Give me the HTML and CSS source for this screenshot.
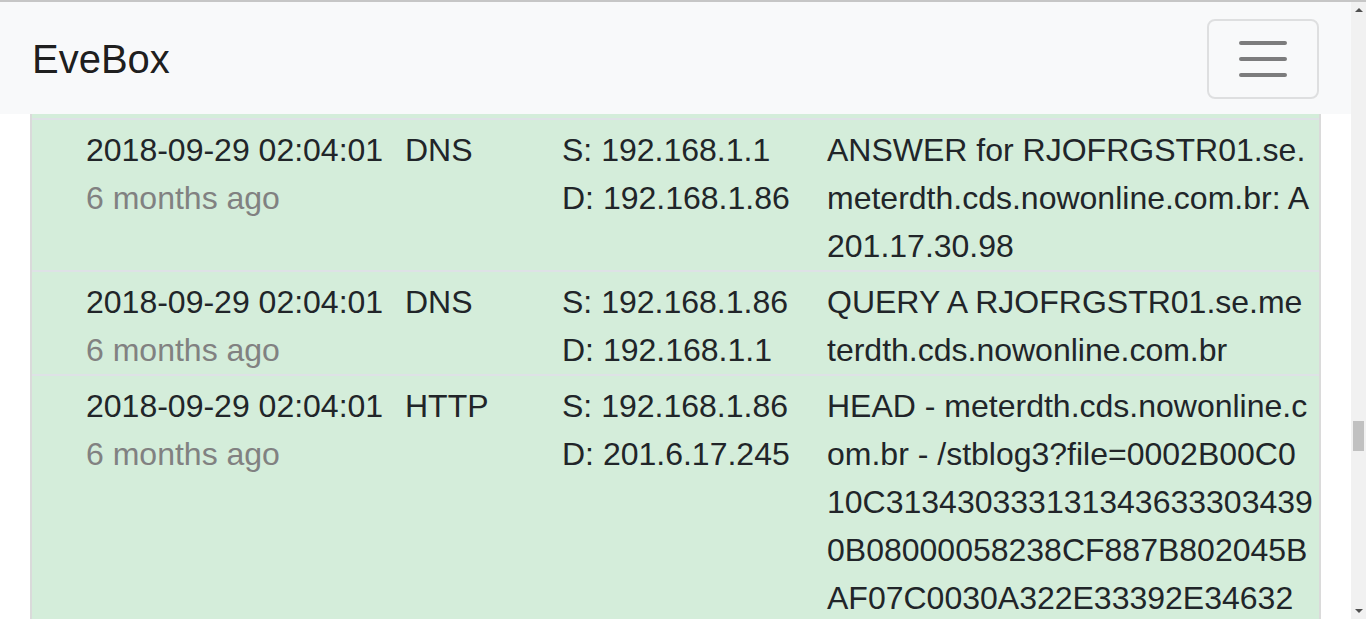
FILE: index.html
```html
<!DOCTYPE html>
<html lang="en">
<head>
<meta charset="utf-8">
<title>EveBox</title>
<link rel="stylesheet" href="styles.css">
</head>
<body>
<div class="window">
  <div class="page">
    <nav class="navbar">
      <a class="brand" href="#">EveBox</a>
      <button class="toggler" type="button" aria-label="Toggle navigation">
        <svg viewBox="0 0 30 30" width="60" height="60"><path d="M4 7h22M4 15h22M4 23h22" stroke="rgba(0,0,0,0.5)" stroke-width="2" stroke-linecap="round" fill="none"/></svg>
      </button>
    </nav>
    <main class="content">
      <div class="events">
        <div class="row-tail"></div>
        <div class="event">
          <div class="cell c-time"><div>2018-09-29 02:04:01</div><div class="ago">6 months ago</div></div>
          <div class="cell c-type">DNS</div>
          <div class="cell c-addr"><div>S: 192.168.1.1</div><div>D: 192.168.1.86</div></div>
          <div class="cell c-msg">ANSWER for RJOFRGSTR01.se.meterdth.cds.nowonline.com.br: A 201.17.30.98</div>
        </div>
        <div class="event">
          <div class="cell c-time"><div>2018-09-29 02:04:01</div><div class="ago">6 months ago</div></div>
          <div class="cell c-type">DNS</div>
          <div class="cell c-addr"><div>S: 192.168.1.86</div><div>D: 192.168.1.1</div></div>
          <div class="cell c-msg">QUERY A RJOFRGSTR01.se.me<br>terdth.cds.nowonline.com.br</div>
        </div>
        <div class="event">
          <div class="cell c-time"><div>2018-09-29 02:04:01</div><div class="ago">6 months ago</div></div>
          <div class="cell c-type">HTTP</div>
          <div class="cell c-addr"><div>S: 192.168.1.86</div><div>D: 201.6.17.245</div></div>
          <div class="cell c-msg">HEAD - meterdth.cds.nowonline.com.br - /stblog3?file=0002B00C010C3134303331313436333034390B08000058238CF887B802045BAF07C0030A322E33392E34632E30363431302E30</div>
        </div>
      </div>
    </main>
  </div>
  <div class="scrollbar" aria-hidden="true">
    <div class="sb-btn sb-up"><span class="tri-up"></span></div>
    <div class="sb-track"><div class="sb-thumb"></div></div>
    <div class="sb-btn sb-down"><span class="tri-down"></span></div>
  </div>
</div>
</body>
</html>
```

FILE: styles.css
```css
* { box-sizing: border-box; }

html, body {
  margin: 0;
  padding: 0;
  height: 100%;
  overflow: hidden;
}

body {
  font-family: "Liberation Sans", Arial, sans-serif;
  color: #212529;
  background: #ffffff;
  border-top: 2px solid #c6c6c6;
}

.window {
  display: flex;
  height: 617px;
}

.page {
  flex: 1;
  display: flex;
  flex-direction: column;
  min-width: 0;
}

.navbar {
  height: 112px;
  flex: none;
  background: #f8f9fa;
  display: flex;
  align-items: center;
  justify-content: space-between;
  padding: 1px 32px 0 32px;
}

.brand {
  font-size: 40px;
  line-height: 60px;
  color: rgba(0, 0, 0, 0.9);
  text-decoration: none;
}

.toggler {
  width: 112px;
  height: 80px;
  padding: 8px 24px;
  background: transparent;
  border: 2px solid rgba(0, 0, 0, 0.1);
  border-radius: 8px;
  display: flex;
  align-items: center;
  justify-content: center;
}

.toggler svg { display: block; }

.content {
  flex: 1;
  overflow: hidden;
  padding: 0 30px;
}

.events {
  background: #d4edda;
  border-left: 2px solid #dadada;
  border-right: 2px solid #dadada;
  min-height: 100%;
}

.row-tail { height: 4px; }

.event {
  display: grid;
  grid-template-columns: 367px 155px 265px 500px;
  border-top: 2px solid #dee2e6;
  font-size: 32px;
  line-height: 48px;
}

.cell {
  padding-top: 6px;
  min-width: 0;
}

.c-time { padding-left: 54px; white-space: nowrap; }
.c-type { padding-left: 6px; }
.c-addr { padding-left: 8px; white-space: nowrap; }
.c-msg {
  padding-left: 8px;
  padding-right: 6px;
  word-break: break-all;
}

.ago { color: #818181; }

.scrollbar {
  width: 15px;
  flex: none;
  background: #f1f1f1;
  display: flex;
  flex-direction: column;
}

.sb-btn {
  height: 15px;
  flex: none;
  display: flex;
  justify-content: center;
}

.sb-up { align-items: flex-start; padding-top: 6px; }
.sb-down { align-items: flex-start; padding-top: 5px; }

.tri-up, .tri-down {
  width: 0;
  height: 0;
  border-left: 4px solid transparent;
  border-right: 4px solid transparent;
}
.tri-up { border-bottom: 4px solid #505050; }
.tri-down { border-top: 4px solid #505050; }

.sb-track { flex: 1; padding: 0 2px; }

.sb-thumb {
  margin-top: 404px;
  height: 30px;
  background: #c1c1c1;
}
```
